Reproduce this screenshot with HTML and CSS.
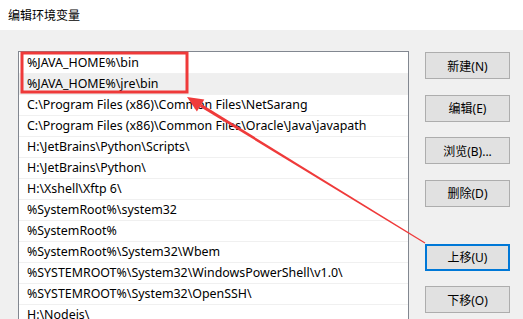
FILE: index.html
```html
<!DOCTYPE html>
<html lang="zh-CN">
<head>
    <meta charset="UTF-8">
    <title>编辑环境变量</title>
    <link rel="stylesheet" href="styles.css">
</head>
<body>
    <div class="dialog">
        <div class="titlebar">编辑环境变量</div>
        <div class="content">
            <div class="path-list">
                <div class="path-row">%JAVA_HOME%\bin</div>
                <div class="path-row hover">%JAVA_HOME%\jre\bin</div>
                <div class="path-row">C:\Program Files (x86)\Common Files\NetSarang</div>
                <div class="path-row">C:\Program Files (x86)\Common Files\Oracle\Java\javapath</div>
                <div class="path-row">H:\JetBrains\Python\Scripts\</div>
                <div class="path-row">H:\JetBrains\Python\</div>
                <div class="path-row">H:\Xshell\Xftp 6\</div>
                <div class="path-row">%SystemRoot%\system32</div>
                <div class="path-row">%SystemRoot%</div>
                <div class="path-row">%SystemRoot%\System32\Wbem</div>
                <div class="path-row">%SYSTEMROOT%\System32\WindowsPowerShell\v1.0\</div>
                <div class="path-row">%SYSTEMROOT%\System32\OpenSSH\</div>
                <div class="path-row">H:\Nodejs\</div>
            </div>
            <div class="actions">
                <button class="btn">新建(N)</button>
                <button class="btn">编辑(E)</button>
                <button class="btn">浏览(B)...</button>
                <button class="btn">删除(D)</button>
                <button class="btn btn-focus spaced">上移(U)</button>
                <button class="btn">下移(O)</button>
            </div>
        </div>

        <!-- marca roja de la captura -->
        <svg class="markup" width="523" height="319" viewBox="0 0 523 319">
            <rect x="22" y="53" width="165" height="39" fill="none" stroke="#ef3a3a" stroke-width="3"/>
            <polygon points="187,97 204.3,99.4 196.9,111.4" fill="#ef3a3a"/>
            <polygon points="199.8,106.7 201.4,104.1 425.3,242.6 424.7,243.4" fill="#ef3a3a"/>
        </svg>
    </div>
</body>
</html>
```

FILE: styles.css
```css
body {
    margin: 0;
    padding: 0;
    font-family: "Noto Sans", "Noto Sans CJK SC", sans-serif;
    font-size: 12px;
    color: #000;
}
.dialog {
    position: relative;
    width: 523px;
    height: 319px;
    overflow: hidden;
    background-color: #f0f0f0;
}
.titlebar {
    height: 30px;
    line-height: 29px;
    padding-left: 8px;
    background-color: #fff;
    font-family: "Noto Sans CJK SC", sans-serif;
}
.content {
    display: flex;
    align-items: flex-start;
    padding: 21px 0 0 18px;
}
.path-list {
    width: 389px;
    height: 400px;
    padding-top: 1px;
    border: 1px solid #828790;
    background-color: #fff;
}
.path-row {
    height: 20px;
    line-height: 20px;
    padding-left: 8px;
    border-bottom: 1px solid #f0f0f0;
    white-space: nowrap;
    font-size: 12.4px;
}
.path-row.hover {
    background-color: #efefef;
}
.actions {
    display: flex;
    flex-direction: column;
    gap: 15.5px;
    margin-left: 16px;
    padding-top: 1px;
}
.btn {
    width: 85px;
    height: 27px;
    padding: 0;
    border: 1px solid #adadad;
    background-color: #e1e1e1;
    font-family: "Noto Sans", "Noto Sans CJK SC", sans-serif;
    font-size: 12px;
    color: #000;
}
.btn-focus {
    border: 2px solid #0078d7;
}
.spaced {
    margin-top: 21.5px;
}
.markup {
    position: absolute;
    left: 0;
    top: 0;
    pointer-events: none;
}
```
